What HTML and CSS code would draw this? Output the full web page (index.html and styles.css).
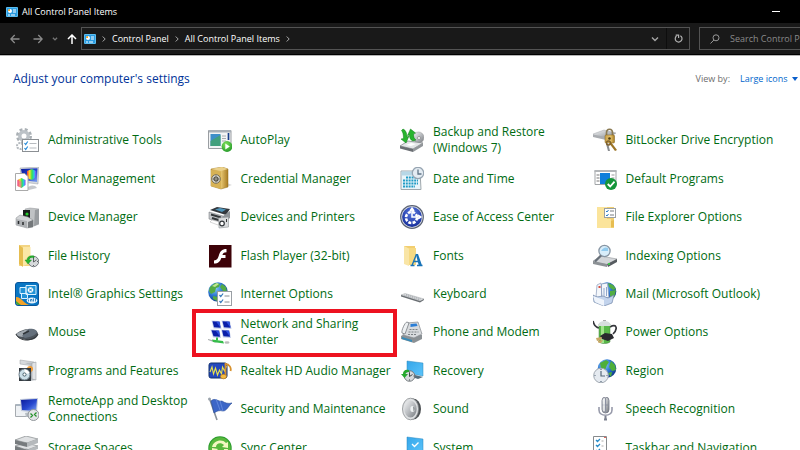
FILE: index.html
```html
<!DOCTYPE html>
<html lang="en">
<head>
<meta charset="utf-8">
<meta name="viewport" content="width=device-width, initial-scale=1">
<title>All Control Panel Items</title>
<link rel="stylesheet" href="styles.css">
</head>
<body>
<svg class="defs" aria-hidden="true" width="0" height="0">
  <defs>
    <linearGradient id="steel" x1="0" y1="0" x2="1" y2="1"><stop offset="0" stop-color="#f4f5f6"/><stop offset=".5" stop-color="#b9bcc0"/><stop offset="1" stop-color="#75797e"/></linearGradient>
    <linearGradient id="screen" x1="0" y1="0" x2="1" y2="1"><stop offset="0" stop-color="#0a1a9a"/><stop offset=".55" stop-color="#2748cf"/><stop offset="1" stop-color="#7ea4f2"/></linearGradient>
    <linearGradient id="sky" x1="0" y1="0" x2="1" y2="1"><stop offset="0" stop-color="#35a6ea"/><stop offset="1" stop-color="#5cc4fa"/></linearGradient>
    <linearGradient id="gold" x1="0" y1="0" x2="1" y2="0"><stop offset="0" stop-color="#caa14a"/><stop offset=".6" stop-color="#e5c46e"/><stop offset="1" stop-color="#a87b22"/></linearGradient>
    <linearGradient id="paperfold" x1="0" y1="0" x2="1" y2="0"><stop offset="0" stop-color="#f7dc87"/><stop offset="1" stop-color="#fbe9ad"/></linearGradient>
    <linearGradient id="rainbow" x1="0" y1="0" x2="1" y2="0"><stop offset="0" stop-color="#f03a3a"/><stop offset=".3" stop-color="#f8e62c"/><stop offset=".55" stop-color="#35e050"/><stop offset=".8" stop-color="#2ac8f0"/><stop offset="1" stop-color="#8a3af0"/></linearGradient>
    <radialGradient id="ocean" cx=".35" cy=".3" r=".8"><stop offset="0" stop-color="#8fd0fb"/><stop offset=".5" stop-color="#2a74cf"/><stop offset="1" stop-color="#0c2f7e"/></radialGradient>
    <radialGradient id="leaf" cx=".4" cy=".3" r=".8"><stop offset="0" stop-color="#7fe05a"/><stop offset="1" stop-color="#1d9426"/></radialGradient>
    <radialGradient id="dial" cx=".5" cy=".3" r=".8"><stop offset="0" stop-color="#5878e0"/><stop offset="1" stop-color="#0c2391"/></radialGradient>
  </defs>
</svg>

<div class="window">
  <header class="titlebar">
    <svg class="app-icon" viewBox="0 0 12 10" aria-hidden="true"><rect width="12" height="10" rx="1" fill="#59bdf0"/><rect x="1" y="1" width="10" height="8" fill="#2b9be0"/><circle cx="4" cy="4" r="2" fill="#fff"/><path d="M4 4V2a2 2 0 0 0-2 2z" fill="#f7a51c"/><path d="M7 3h3M7 5h3M2 8h2M5 8h4" stroke="#fff"/></svg>
    <h1 class="window-title">All Control Panel Items</h1>
    <button class="minimize" type="button" aria-label="Minimize"><svg viewBox="0 0 8 8"><path d="M0 3.500h8" stroke="#fff"/></svg></button>
  </header>

  <div class="toolbar">
    <div class="history">
      <button type="button" class="tool" aria-label="Back"><svg viewBox="0 0 10 10"><path d="M9.500 5H1M4.700 1L.8 5l3.900 4" fill="none" stroke="#8c8c8c" stroke-width="1.300"/></svg></button>
      <button type="button" class="tool" aria-label="Forward"><svg viewBox="0 0 10 10"><path d="M.5 5H9M5.300 1l3.900 4-3.900 4" fill="none" stroke="#8c8c8c" stroke-width="1.300"/></svg></button>
      <button type="button" class="tool small" aria-label="Recent locations"><svg viewBox="0 0 10 10"><path d="M1.500 3L5 6.500 8.500 3" fill="none" stroke="#777" stroke-width="2.200"/></svg></button>
      <button type="button" class="tool" aria-label="Up"><svg viewBox="0 0 10 10"><path d="M5 10V1M1 5l4-4 4 4" fill="none" stroke="#fff" stroke-width="1.500"/></svg></button>
    </div>
    <div class="address">
      <svg class="app-icon" viewBox="0 0 12 10" aria-hidden="true"><rect width="12" height="10" rx="1" fill="#59bdf0"/><rect x="1" y="1" width="10" height="8" fill="#2b9be0"/><circle cx="4" cy="4" r="2" fill="#fff"/><path d="M4 4V2a2 2 0 0 0-2 2z" fill="#f7a51c"/><path d="M7 3h3M7 5h3M2 8h2M5 8h4" stroke="#fff"/></svg>
      <nav class="crumbs" aria-label="Location">
        <svg class="sep" viewBox="0 0 4 6"><path d="M.7.500L3.200 3 .7 5.500" fill="none" stroke="#aaa"/></svg>
        <a href="#">Control Panel</a>
        <svg class="sep" viewBox="0 0 4 6"><path d="M.7.500L3.200 3 .7 5.500" fill="none" stroke="#aaa"/></svg>
        <a href="#">All Control Panel Items</a>
        <svg class="sep" viewBox="0 0 4 6"><path d="M.7.500L3.200 3 .7 5.500" fill="none" stroke="#aaa"/></svg>
      </nav>
      <button type="button" class="tool mid" aria-label="Previous locations"><svg viewBox="0 0 8 8"><path d="M1 2.500l3 3 3-3" fill="none" stroke="#a5a5a5" stroke-width="1.400"/></svg></button>
      <button type="button" class="tool refresh" aria-label="Refresh"><svg viewBox="0 0 9 9"><path d="M6.300 1.700A3.400 3.400 0 1 1 2.500 2M1.700 1.200h2.900v2.700" fill="none" stroke="#b0b0b0" stroke-width="1.200"/></svg></button>
    </div>
    <div class="search">
      <svg viewBox="0 0 10 10" aria-hidden="true"><circle cx="6" cy="3.800" r="3" fill="none" stroke="#999"/><path d="M3.900 6L.5 9.500" stroke="#999"/></svg>
      <input type="text" placeholder="Search Control Panel" aria-label="Search Control Panel">
    </div>
  </div>

  <main>
    <div class="heading">
      <h2>Adjust your computer's settings</h2>
      <div class="view">
        <label for="view-by">View by:</label>
        <span class="picker">
          <select id="view-by"><option>Large icons</option></select>
          <svg viewBox="0 0 6 4" aria-hidden="true"><path d="M0 0h6L3 4z" fill="#0a5fcb"/></svg>
        </span>
      </div>
    </div>

    <div class="items">
      <a class="item" href="#"><svg class="icon" viewBox="0 0 24 24"><circle cx="9" cy="8" r="6.500" fill="none" stroke="#aab0b5" stroke-width="3" stroke-dasharray="2.800 2.300"/><circle cx="9" cy="8" r="4.200" fill="none" stroke="#bcc2c7" stroke-width="3.400"/><circle cx="5" cy="18" r="3" fill="none" stroke="#b5babf" stroke-width="2" stroke-dasharray="2 1"/><rect x="7.500" y="11.500" width="16" height="12" fill="#fff" stroke="#8b8f93"/><path d="M9.500 15l1.200 1.500 2-3M9.500 20l1.200 1.500 2-3" fill="none" stroke="#258ad8" stroke-width="1.200"/><path d="M14.500 15.500h7M14.500 20h7" stroke="#b7bbbf"/></svg><span>Administrative Tools</span></a>
      <a class="item" href="#"><svg class="icon" viewBox="0 0 24 24"><path d="M.5 2.500h22.500v18H.5z" fill="#f3f4f5" stroke="#9a9ea2"/><path d="M1 2h22v2.500H1z" fill="#a9b0b8"/><path d="M2.500 6h10v12h-10z" fill="#3e8fc9"/><path d="M2.500 18V13l10-6v11z" fill="#42a07d"/><path d="M14 8h4M14 10.500h4M14 13h4" stroke="#a8acb0"/><path d="M20.500 5v7" stroke="#183e8a" stroke-width="1.700"/><circle cx="19" cy="18.500" r="5.400" fill="url(#leaf)"/><path d="M17.300 15.500v6l4.500-3z" fill="#fff"/></svg><span>AutoPlay</span></a>
      <a class="item" href="#"><svg class="icon" viewBox="0 0 24 24"><circle cx="18.500" cy="9.500" r="5.500" fill="url(#steel)" stroke="#999" stroke-width=".5"/><circle cx="19" cy="10" r="1.500" fill="#fff" stroke="#777" stroke-width=".6"/><path d="M0 18l8-5 15 2-10 6z" fill="#e4e6e8" stroke="#7a7e82" stroke-width=".7"/><path d="M0 18l13 3v3L0 20.500z" fill="#6b6f74"/><path d="M13 21l10-6v3l-10 6z" fill="#92969a"/><path d="M6 17l5-2 5 1-5 2z" fill="#fff"/><path d="M3 1c3 1 4 5 4 8l2-1-3 7-5-4 2.500-.5C3.500 7 3 4 1.500 2.500zM13 13c-3-1-3.500-4-3.500-6L7.500 7.500 10.500 1l5 4-2 .8c0 3 .5 5 2.500 6.200z" fill="#27b52d" stroke="#0e7d18" stroke-width=".5"/></svg><span>Backup and Restore (Windows 7)</span></a>
      <a class="item" href="#"><svg class="icon" viewBox="0 0 24 24"><path d="M0 6l11-4 12 3-9 6L0 8z" fill="url(#steel)" stroke="#94989c" stroke-width=".4"/><path d="M0 6.500l13 2.500v3L0 9z" fill="#a9acb0"/><path d="M13.500 8V5c0-5 6-5 6 0v3" fill="none" stroke="#8a7a52" stroke-width="1.700"/><rect x="12" y="7" width="9.500" height="8" rx="1" fill="url(#gold)" stroke="#80601c" stroke-width=".5"/><circle cx="16.500" cy="10.500" r="1.300" fill="#4c3a12"/><path d="M18 14l6 8-2 1-6-8z" fill="#9b7427"/><path d="M15 15l2 8h-2l-2-7z" fill="#8a8d90"/><circle cx="15.500" cy="15" r="2" fill="none" stroke="#80612a" stroke-width="1.300"/></svg><span>BitLocker Drive Encryption</span></a>

      <a class="item" href="#"><svg class="icon" viewBox="0 0 24 24"><path d="M5 1l19-1-1 17-16-2z" fill="#d4d8de" stroke="#9aa0a6" stroke-width=".5"/><path d="M6 2l16.500-.7L22 15 8 13z" fill="url(#screen)"/><path d="M12 4l5-2 4 2v6l-4 3-5-2z" fill="url(#rainbow)"/><path d="M12 22c1-4 8-5 10-1l-8 2z" fill="#c5c8cc"/><path d="M.5 6.500h9l3.500 3V23.500H.5z" fill="#fff" stroke="#aaa"/><path d="M2.500 13l4-2 4 2v5l-4 3-4-2z" fill="url(#rainbow)"/><path d="M2.500 13l4 1.500v6.500l-4-2z" fill="#ef4acb" opacity=".5"/></svg><span>Color Management</span></a>
      <a class="item" href="#"><svg class="icon" viewBox="0 0 24 24"><path d="M18 20l6-2-8-3z" fill="#d7d7d7"/><path d="M3 2l11-2 6 2v18l-7 2-10-3z" fill="url(#gold)" stroke="#94701f" stroke-width=".5"/><path d="M3 3l10 1.500V22L3 19z" fill="#d7b255"/><path d="M3 2l11-2 6 2-7 2z" fill="#ebd18b"/><circle cx="8" cy="12" r="4.300" fill="#d9d9d2" stroke="#786f58" stroke-width="1"/><circle cx="8" cy="12" r="2" fill="none" stroke="#514c40" stroke-width="1.200"/><path d="M8 8.500v7M4.500 12h7" stroke="#5d594f" stroke-width=".7"/></svg><span>Credential Manager</span></a>
      <a class="item" href="#"><svg class="icon" viewBox="0 0 24 24"><path d="M1 4h19l1 18.500H1z" fill="#eaf5fa" stroke="#a0a8ad"/><path d="M1.500 4.500h18v4h-18z" fill="#b7d7e6"/><path d="M6 10.500h12M3 13.500h15M3 16.500h15M3 19.500h12" stroke="#219cc5" stroke-width="2" stroke-dasharray="2 .8"/><circle cx="18" cy="6" r="5.700" fill="#e3ebf2" stroke="#97a5b2" stroke-width="1.200"/><path d="M18 2.500V7h3.500" fill="none" stroke="#607486" stroke-width="1.300"/></svg><span>Date and Time</span></a>
      <a class="item" href="#"><svg class="icon" viewBox="0 0 24 24"><path d="M2 3.500h21v14H2z" fill="#fff" stroke="#a1a4a7"/><path d="M1.500 3h22v2h-22z" fill="#b2b5b8"/><path d="M3.500 8h3M3.500 11h3M3.500 14h3" stroke="#777" stroke-width="1.200"/><rect x="7" y="6" width="10" height="11" fill="#0f7fdb"/><path d="M18.500 8h3M18.500 11h3" stroke="#999"/><circle cx="18" cy="17" r="6" fill="#14953a"/><path d="M14.700 17l2.500 2.500 4.300-4.800" fill="none" stroke="#fff" stroke-width="1.800"/></svg><span>Default Programs</span></a>

      <a class="item" href="#"><svg class="icon" viewBox="0 0 24 24"><path d="M10 4l5-1 9 1v15l-5 2-8-3z" fill="#c0c3c5" stroke="#909498" stroke-width=".5"/><path d="M20 5l4-1v15l-5 2z" fill="#999da0"/><path d="M8 5h7v9H8z" fill="#191c1b"/><circle cx="12" cy="9" r="1.600" fill="#26cb2c"/><path d="M1 13l4-3 8 2 5 3v7l-6 1-11-3z" fill="#d2d4d6" stroke="#888c90" stroke-width=".5"/><path d="M1 14l11 2v7L1 20z" fill="#aeb1b4"/><path d="M3.500 16v3M8 17v3" stroke="#282b2d" stroke-width="1.500"/><path d="M13 17l5-2v7l-5 1z" fill="#74787b"/></svg><span>Device Manager</span></a>
      <a class="item" href="#"><svg class="icon" viewBox="0 0 24 24"><path d="M2 5l7-3 13 2-4 6z" fill="#33383d"/><path d="M7 4.500l5-1.500 6 1.500-4 2.500z" fill="#4f95ba"/><path d="M1 7l14 4v7L1 14z" fill="#c5c8cb" stroke="#686d71" stroke-width=".5"/><path d="M15 11l7-5v7l-7 5z" fill="#8f9498"/><path d="M3 9.500l10 3M4 13l8 2.500" stroke="#34383b" stroke-width="2"/><path d="M4 15l8 2-2 3-8-3z" fill="#fff" stroke="#999" stroke-width=".4"/><path d="M10.500 13l10-1v10l-9.500 1z" fill="#dadcde" stroke="#8e9396" stroke-width=".6"/><circle cx="14" cy="18.500" r="2.300" fill="#fff" stroke="#33383b" stroke-width="1.200"/><path d="M18.500 14v3" stroke="#333"/></svg><span>Devices and Printers</span></a>
      <a class="item" href="#"><svg class="icon" viewBox="0 0 24 24"><circle cx="12" cy="12" r="11.900" fill="#5a6274"/><circle cx="12" cy="12" r="10.700" fill="#d8dce3"/><circle cx="12" cy="12" r="9.900" fill="url(#dial)"/><circle cx="11.500" cy="12.500" r="5.500" fill="none" stroke="#fff" stroke-width="2.600" stroke-dasharray="3 1.320"/><path d="M12 4v8h8M10 6l2-3 2 3M18 10l3 2-3 2" fill="none" stroke="#fff" stroke-width="1.500"/></svg><span>Ease of Access Center</span></a>
      <a class="item" href="#"><svg class="icon" viewBox="0 0 24 24"><path d="M4 2h17v21H4z" fill="#f1cf72"/><path d="M4 2h10v20H4z" fill="#fbe49b"/><rect x="11.500" y="3.500" width="11" height="9" fill="#fff" stroke="#9ba0a3"/><path d="M13 6l1 1 1.500-2M13 10l1 1 1.500-2" fill="none" stroke="#287cc5"/><path d="M17 6h4M17 10h4" stroke="#777c80"/><path d="M4 14h14v9H4z" fill="#fbe49b"/><path d="M18 16l3-1v7h-3z" fill="#e7bd51"/></svg><span>File Explorer Options</span></a>

      <a class="item" href="#"><svg class="icon" viewBox="0 0 24 24"><path d="M4 1h11v21H4z" fill="#f3d584"/><path d="M4 1l4 3v19l-4-3z" fill="#e6bd50"/><path d="M8 3h7.500v16L8 22z" fill="#fbe7a6"/><circle cx="18.500" cy="17.500" r="5.200" fill="#d7dadc" stroke="#777c80"/><path d="M18.500 14v4l3-2M18.500 13v1M18.500 21v1M14 17.500h1M22 17.500h1" fill="none" stroke="#4f5558" stroke-width=".9"/><path d="M19 12c-4-1-7 1-7 4h-2l3 4 3.500-4H14c0-2 2-3 5-2z" fill="#27b52f" stroke="#12831a" stroke-width=".4"/></svg><span>File History</span></a>
      <a class="item" href="#"><svg class="icon" viewBox="0 0 24 24"><rect x="1" y="1" width="22.500" height="22.500" fill="#3d0208"/><path d="M18.500 5v3.200c-3 0-3.500 1.200-4.100 2.800H17.500v3h-4.200c-1.300 3.600-2.800 5.500-7.300 5.500v-3.100c3.100 0 3.900-2 5-5.400C12.200 7.400 13.700 5 18.500 5z" fill="#fff"/></svg><span>Flash Player (32-bit)</span></a>
      <a class="item" href="#"><svg class="icon" viewBox="0 0 24 24"><path d="M4 2h11v18H4z" fill="#f2ce70"/><path d="M4 2l5 2.500V22l-5-2z" fill="#f9e5a6"/><path d="M9 4h7v17H9z" fill="#f6d982"/><path d="M12 21.500l4.500-11.500M10.500 21.500h4M17 21.500h5.500M13.500 17.500h6" fill="none" stroke="#1873b7" stroke-width="1.300"/><path d="M15.800 10h2.200l4 11.500h-3.200z" fill="#1873b7"/></svg><span>Fonts</span></a>
      <a class="item" href="#"><svg class="icon" viewBox="0 0 24 24"><path d="M0 17l8-5 16 3-9 6-15-3z" fill="#d3d6d9" stroke="#85898d" stroke-width=".5"/><path d="M0 17l14 3v3L0 20z" fill="#8c9195"/><path d="M14 20l10-5v3l-9 5z" fill="#565b60"/><circle cx="16" cy="20" r="1" fill="#35e242"/><circle cx="11.500" cy="7" r="5.600" fill="#d8edfa" stroke="#8795a3" stroke-width="1.300"/><path d="M8 7q3-5 7-3v3z" fill="#92cbee"/><path d="M8 11.500l-6 6" stroke="#687079" stroke-width="2.300"/></svg><span>Indexing Options</span></a>

      <a class="item" href="#"><svg class="icon" viewBox="0 0 24 24"><rect x=".5" y=".5" width="23" height="23" rx="2.500" fill="#0876c4" stroke="#07559b"/><path d="M1 15c6 0 8 8 15 8H3l-2-2z" fill="#f2a229"/><path d="M1 19l5 4H3l-2-2z" fill="#40a735"/><path d="M11 3.500h10v9H11zM5 5.500h6v6H5zM6.500 11.500h6v5h-6z" fill="#2193d6" stroke="#d9f0ff"/><circle cx="15.500" cy="8" r="2.800" fill="#fff"/><path d="M14 6.500l3 3M17 6.500l-3 3" stroke="#1682c5"/><ellipse cx="17" cy="18.500" rx="5.300" ry="3" fill="#e9f4fc"/><path d="M13.500 17.500v2M15.500 19.500v-2h1.500v2M18.500 16.500v3M20.500 16.500v3" fill="none" stroke="#0969b3" stroke-width=".8"/></svg><span>Intel® Graphics Settings</span></a>
      <a class="item" href="#"><svg class="icon" viewBox="0 0 24 24"><circle cx="10" cy="10" r="9.800" fill="url(#ocean)"/><path d="M2 5l5-4 5 1-1 3-3 1-1 4-4 2-2-3zM14 2l4 3 1 5-4-1-3-4zM5 14l5 1-1 4-4-2z" fill="#53ab45"/><path d="M4 4l5-3 2 1-4 3z" fill="#c1e890"/><rect x="9.500" y="9.500" width="14" height="14" fill="#fff" stroke="#999fa4"/><path d="M11.500 13l1.300 1.500 2.300-3M11.500 19l1.300 1.500 2.300-3" fill="none" stroke="#3277ba" stroke-width="1.200"/><path d="M16.500 14h5M16.500 20h5" stroke="#888e93"/></svg><span>Internet Options</span></a>
      <a class="item" href="#"><svg class="icon" viewBox="0 0 24 24"><path d="M1 13l4-1.500 19 5.500-4 2z" fill="#dfe1e3" stroke="#a2a6a9" stroke-width=".5"/><path d="M1 13l19 6 4-2v1l-4 2.500L1 14.500z" fill="#6a6f73"/><path d="M4 13l16 5M6 12.500l15 4.500" stroke="#9a9ea3" stroke-width=".7" stroke-dasharray="1.500 .6"/></svg><span>Keyboard</span></a>
      <a class="item" href="#"><svg class="icon" viewBox="0 0 24 24"><circle cx="14" cy="9.500" r="9.300" fill="url(#ocean)"/><path d="M15 1l5 2 3 4-3 1-4-3zM17 9l6-1-2 8-4-2z" fill="#52ad42"/><path d="M4 3l4-2 1 15-6-1zM8.500 2l6-1 1.500 15-7.500-1z" fill="#f4f7fb" stroke="#8899ba" stroke-width=".7"/><rect x="5.500" y="4" width="2" height="2" fill="#d84d3d"/><path d="M0 13l4 2 6-1 5 2 6-3-2 8-8 3-10-4z" fill="#c2d3ec" stroke="#7186a9" stroke-width=".7"/><path d="M0 14l11 4v6L2 20z" fill="#eff4fb"/><path d="M11 6v8M13.500 5v9" stroke="#91a8cd"/></svg><span>Mail (Microsoft Outlook)</span></a>

      <a class="item" href="#"><svg class="icon" viewBox="0 0 24 24"><path d="M1 14c3-3 9-5 13-5 5 0 9 2 9 5 0 4-6 7-12 6-4-1-9-2-10-6z" fill="#4c535b"/><path d="M1 14c3-2 8-4 12-5l5 2-10 6c-3 0-6-1-7-3z" fill="#a3aab1"/><path d="M13 9c5-1 9 1 9 3-1 3-6 5-12 6l-3-2z" fill="#65707c"/><path d="M8 14l6-3" stroke="#31363b" stroke-width="1.500"/><path d="M1 14c1 4 7 6 10 6 6 0 11-3 12-6" fill="none" stroke="#303437"/></svg><span>Mouse</span></a>
      <a class="item highlighted" href="#"><svg class="icon" viewBox="0 0 24 24"><path d="M3.500.500l8.500.500 1.500 8-8-.5zM13.500.500l8.500.500 1.500 8-8-.5zM2.500 9.500l9 .5 1.500 8-8-.5zM13 9.500l8.500.5 1.500 8-8-.5z" fill="#c5cfea"/><path d="M4.500 1.200l7 .5 1 6-6.500-.4zM14.500 1.200l7 .5 1 6-6.500-.4zM3.500 10.200l7.500.5 1 6-6.500-.4zM14 10.200l7 .5 1 6-6.500-.4z" fill="#0a1fa8"/><path d="M8 1.500l3.500.2 1 6zM18 1.500l3.500.2 1 6zM7.500 10.500l3.500.2 1 6zM17.500 10.500l3.500.2 1 6z" fill="#2c4fe0"/><path d="M0 19l6 1.500L10 22l-3 .5-7-2.500z" fill="#a8acae"/><path d="M4 19.500l11 1.500 1 2.500-11-1.500z" fill="#35bd4a"/><path d="M9 17.500v3" stroke="#35bd4a" stroke-width="2"/><ellipse cx="19" cy="22.500" rx="2.500" ry="1.300" fill="#bbb"/></svg><span>Network and Sharing Center</span></a>
      <a class="item" href="#"><svg class="icon" viewBox="0 0 24 24"><path d="M1 16l5-3 16 2v4l-8 4-13-4z" fill="#8b9195"/><path d="M2 17l10 3v2L2 19z" fill="#368bb9"/><path d="M7 3l11-1 4 12-8 4-11-3z" fill="#d8dbde" stroke="#868b90" stroke-width=".7"/><path d="M10.500 4l6-.5 1 2.500-7 1z" fill="#2a7ed6"/><path d="M7 2c-2 0-6 9-5 11l3 1 4-11z" fill="#edf0f2" stroke="#777c81" stroke-width=".8"/><path d="M9.500 9.500h8M8.500 12h10M8 14.500h9" stroke="#7c8286" stroke-dasharray="2 1"/></svg><span>Phone and Modem</span></a>
      <a class="item" href="#"><svg class="icon" viewBox="0 0 24 24"><path d="M0 1c1 4 2 6 6 7M17 7c7-4 8 2 3 7" fill="none" stroke="#36373c" stroke-width="1.700"/><path d="M6 4c2-2 9-2 11 0v18c-3 2-8 2-11 0z" fill="#59b849" stroke="#44803c" stroke-width=".5"/><path d="M8 5h3v18H8z" fill="#a2e58b"/><path d="M5.500 4c1-2 3-3 6-3s5 1 6 3v2h-12z" fill="#d8dedd"/><path d="M10 1V0h3v1" fill="#aaa"/><path d="M7 16l5-3 7 1 2 4-6 3-6-2z" fill="#292a2e"/><path d="M3 18l6-1-1 3-4 1zM5 21l5-1-2 3-3-.5z" fill="#caa867"/></svg><span>Power Options</span></a>

      <a class="item" href="#"><svg class="icon" viewBox="0 0 24 24"><path d="M5 1l14 2v4L5 5z" fill="#d6d9dc" stroke="#999da1" stroke-width=".5"/><path d="M10 4l11-1v18l-6 1V6z" fill="#b7bcc1"/><path d="M17 4l4-1v18l-4-1z" fill="#e2e4e6" stroke="#979b9f" stroke-width=".5"/><circle cx="15" cy="10" r="3" fill="#ef9b37"/><path d="M4 9h12v13H4z" fill="#333a40"/><circle cx="9.500" cy="15.500" r="5.500" fill="#cbdfe8" stroke="#6d7d88"/><path d="M9.500 10q4 1 5 4l-5 1.500z" fill="#fff"/><circle cx="9.500" cy="15.500" r="1.600" fill="#fff" stroke="#47616d"/></svg><span>Programs and Features</span></a>
      <a class="item" href="#"><svg class="icon" viewBox="0 0 24 24"><rect x="1" y="4" width="18" height="15" rx="2" fill="#2448bd" stroke="#11306f"/><path d="M2 13l2-5 1.500 7 2-6 2 7 2-5 2 4 1-7 2 4 2-5" fill="none" stroke="#ece34a" stroke-width="1.100"/><path d="M17.500 4v13M17.500 5c4 0 6 4 5 7" fill="none" stroke="#d7912d" stroke-width="1.800"/><ellipse cx="15.500" cy="17.500" rx="3" ry="2.300" fill="#f4ba42" stroke="#b3771d" stroke-width=".7"/></svg><span>Realtek HD Audio Manager</span></a>
      <a class="item" href="#"><svg class="icon" viewBox="0 0 24 24"><path d="M7 2l16 2v13L7 14z" fill="url(#sky)" stroke="#2f88bb" stroke-width=".5"/><path d="M11 15l12 3-5 2-9-3z" fill="#566e7c"/><circle cx="9.500" cy="17" r="5.300" fill="#d6dadd" stroke="#777d81"/><path d="M9.500 13.500v4l3-2M9.500 12.500v1M9.500 20.500v1M13.500 17h1" fill="none" stroke="#3d4447"/><path d="M9 11c-4-1-6 1-6 4H1l3.500 4L8 15H5.500c0-1 1-2 3.500-2z" fill="#25a82d"/></svg><span>Recovery</span></a>
      <a class="item" href="#"><svg class="icon" viewBox="0 0 24 24"><circle cx="14" cy="9.500" r="9.300" fill="url(#ocean)"/><path d="M7 4l6-3 3 2-2 3-2 5-4-2zM18 2l4 4 1 5-4 1-3-4zM15 14l4-1-1 5z" fill="#4eaf3a"/><circle cx="8" cy="16.500" r="7.300" fill="#e5eaf0" stroke="#a0a8b1"/><path d="M8 12v5h4M8 10v1M8 22v1M1.500 16.500h1M13.500 16.500h1" fill="none" stroke="#546678" stroke-width="1.200"/></svg><span>Region</span></a>

      <a class="item" href="#"><svg class="icon" viewBox="0 0 24 24"><path d="M.5 7.500h13v12H.5z" fill="#eef1f4" stroke="#a6abb0"/><path d="M1 7h13v2H1z" fill="#aab5c0"/><path d="M5 2l18-1-1 15-16-2z" fill="#c1cadb"/><path d="M6 3l16-1-1 12-14-1z" fill="url(#screen)"/><path d="M10 16l5-1 2 4-6 1z" fill="#b8bfc5"/><circle cx="18.500" cy="18" r="5.500" fill="#e2e5e7" stroke="#92979b"/><path d="M15.500 16.500l2 2-2 2M21.500 15.500l-2 2 2 2" fill="none" stroke="#27922d" stroke-width="1.300"/></svg><span>RemoteApp and Desktop Connections</span></a>
      <a class="item" href="#"><svg class="icon" viewBox="0 0 24 24"><circle cx="1.500" cy="2" r="1.500" fill="#9ba3ac"/><path d="M2 3l7 20" stroke="#89919a" stroke-width="1.600"/><path d="M3 4c4-4 7 1 11 0 3 2 6 3 10 2-3 2-5 8-9 8-4-1-6 0-9 2z" fill="#3c66c7" stroke="#244895" stroke-width=".6"/><path d="M12 4l3 10M8 2l4 11" stroke="#6a8fe0" stroke-width=".8"/></svg><span>Security and Maintenance</span></a>
      <a class="item" href="#"><svg class="icon" viewBox="0 0 24 24"><ellipse cx="13" cy="12" rx="8" ry="10.500" fill="#4e5255"/><ellipse cx="10.500" cy="12" rx="8" ry="10.800" fill="#dfe1e3" stroke="#888c8f" stroke-width=".8"/><ellipse cx="10.500" cy="12" rx="6.200" ry="8.600" fill="url(#steel)"/><ellipse cx="12.500" cy="12" rx="2.200" ry="3" fill="#eef1f2"/><path d="M13 9.500c2 0 2.500 3 .5 5z" fill="#898e91"/></svg><span>Sound</span></a>
      <a class="item" href="#"><svg class="icon" viewBox="0 0 24 24"><path d="M6 10v3c0 7 13 7 13 0v-3" fill="none" stroke="#979aaa" stroke-width="1.600"/><rect x="9" y="0" width="7" height="16" rx="3.500" fill="url(#steel)" stroke="#707484" stroke-width=".8"/><path d="M12.500 1v14M9.500 8h6" stroke="#8b90a0" stroke-width="1"/><path d="M11 2v12" stroke="#f9fafa" stroke-width="1.200"/><path d="M12.500 19v4M11 22.500h3" stroke="#7e8290" stroke-width="2"/></svg><span>Speech Recognition</span></a>

      <a class="item" href="#"><svg class="icon" viewBox="0 0 24 24"><path d="M0 4l11-4 12 3-11 4zM0 10l11-3 12 3-11 4zM0 16l11-3 12 3-11 4z" fill="#dfe1e3" stroke="#85898c" stroke-width=".7"/><path d="M0 4l12 3v4L0 8zM0 10l12 4v3L0 14z" fill="#777b7e"/><path d="M12 7l11-4v4l-11 4zM12 14l11-4v3l-11 4z" fill="#b5b9bc"/></svg><span>Storage Spaces</span></a>
      <a class="item" href="#"><svg class="icon" viewBox="0 0 24 24"><circle cx="12" cy="12" r="11.700" fill="#289a2c"/><circle cx="12" cy="12" r="10.700" fill="#58b83c"/><path d="M4 11c1-6 10-9 14-4l2-1v6l-6-1 2-2c-3-3-8-2-8 2zM20 13c-1 6-10 9-14 4l-2 1v-6l6 1-2 2c3 3 8 2 8-2z" fill="#f2f7c0"/></svg><span>Sync Center</span></a>
      <a class="item" href="#"><svg class="icon" viewBox="0 0 24 24"><path d="M7 1l16 2v15L7 14z" fill="url(#sky)" stroke="#2686be" stroke-width=".5"/><path d="M12 8l2.500 2.500 4-4" fill="none" stroke="#fff" stroke-width="1.300"/><path d="M12 16l8 4-6 1-5-3z" fill="#7a8992"/></svg><span>System</span></a>
      <a class="item" href="#"><svg class="icon" viewBox="0 0 24 24"><path d="M.5.500h13v22H.5z" fill="#fff" stroke="#868a8d"/><path d="M3 4l1.500 1.500L7 3M3 9l1.500 1.500L7 8M3 14l1.500 1.500L7 13" fill="none" stroke="#298cc8" stroke-width="1.300"/><path d="M8.500 5h2M8.500 10h2" stroke="#aaa"/><path d="M11 1h2v1h-2z" fill="#df675d"/></svg><span>Taskbar and Navigation</span></a>
    </div>
  </main>
</div>
</body>
</html>
```
FILE: styles.css
```css
* {
  box-sizing: border-box;
}

body {
  margin: 0;
  height: 100vh;
  overflow: hidden;
  background: #fff;
  font-family: "Open Sans", "Noto Sans", sans-serif;
  font-size: 12px;
  line-height: 16px;
}

h1,
h2 {
  margin: 0;
  font-weight: 400;
}

a {
  color: inherit;
  text-decoration: none;
}

button {
  border: 0;
  padding: 0;
  background: none;
}

svg {
  display: block;
  flex: none;
}

.defs {
  position: absolute;
}

.app-icon {
  width: 12px;
  height: 10px;
}

.titlebar {
  display: flex;
  align-items: center;
  gap: 4px;
  height: 23px;
  padding: 0 20px 0 6px;
  background: #000;
  color: #fff;
}

.window-title {
  flex: 1;
  font-size: 9px;
}

.minimize svg {
  width: 8px;
  height: 8px;
}

.toolbar {
  display: flex;
  align-items: center;
  height: 32px;
  padding-left: 10px;
  background: #191919;
  border-bottom: 1px solid #000;
  color: #fff;
  font-size: 9px;
}

.history {
  display: flex;
  align-items: center;
  gap: 9px;
  margin-right: 4px;
}

.tool svg {
  width: 10px;
  height: 10px;
}

.tool:first-child {
  margin-right: 4px;
}

.tool.small svg {
  width: 6px;
  height: 6px;
}

.tool.mid svg {
  width: 8px;
  height: 8px;
}

.address {
  flex: 1;
  display: flex;
  align-items: center;
  height: 23px;
  padding-left: 2px;
  border: 1px solid #535353;
}

.crumbs {
  flex: 1;
  display: flex;
  align-items: center;
  gap: 6px;
  margin-left: 6px;
}

.sep {
  width: 4px;
  height: 6px;
}

.refresh {
  display: grid;
  place-items: center;
  width: 23px;
  height: 21px;
  margin-left: 7px;
  border-left: 1px solid #0d0d0d;
}

.refresh svg {
  width: 9px;
  height: 9px;
}

.search {
  display: flex;
  align-items: center;
  gap: 10px;
  width: 101px;
  height: 23px;
  margin-left: 9px;
  padding-left: 10px;
  border: 1px solid #535353;
  border-right: 0;
}

.search svg {
  width: 10px;
  height: 10px;
}

.search input {
  flex: 1;
  min-width: 0;
  padding: 0;
  border: 0;
  background: none;
  color: #fff;
  font: inherit;
}

.search input::placeholder {
  color: #8a8a8a;
}

main {
  border-top: 1px solid #b5b5b5;
}

.heading {
  display: flex;
  align-items: center;
  justify-content: space-between;
  height: 46px;
  padding: 0 2px 0 13px;
}

.heading h2 {
  color: #003399;
  font-size: 12px;
}

.view {
  display: flex;
  align-items: center;
  gap: 10px;
  color: #6d6d6d;
  font-size: 9px;
}

.picker {
  display: flex;
  align-items: center;
  gap: 4px;
}

.picker select {
  appearance: none;
  padding: 0;
  border: 0;
  background: none;
  color: #0066cc;
  font: inherit;
}

.picker svg {
  width: 6px;
  height: 4px;
}

.items {
  display: grid;
  grid-template-columns: repeat(4, 1fr);
  grid-auto-rows: 1fr;
  min-height: 346px;
  margin-top: 19px;
  padding: 0 15px;
}

.item {
  position: relative;
  display: flex;
  align-items: center;
  gap: 9px;
  padding-right: 8px;
  color: #006b12;
}

.icon {
  width: 24px;
  height: 24px;
}

.highlighted::after {
  content: "";
  position: absolute;
  inset: -4px 3px -5px -16px;
  border: 4px solid #ed1220;
}
```
